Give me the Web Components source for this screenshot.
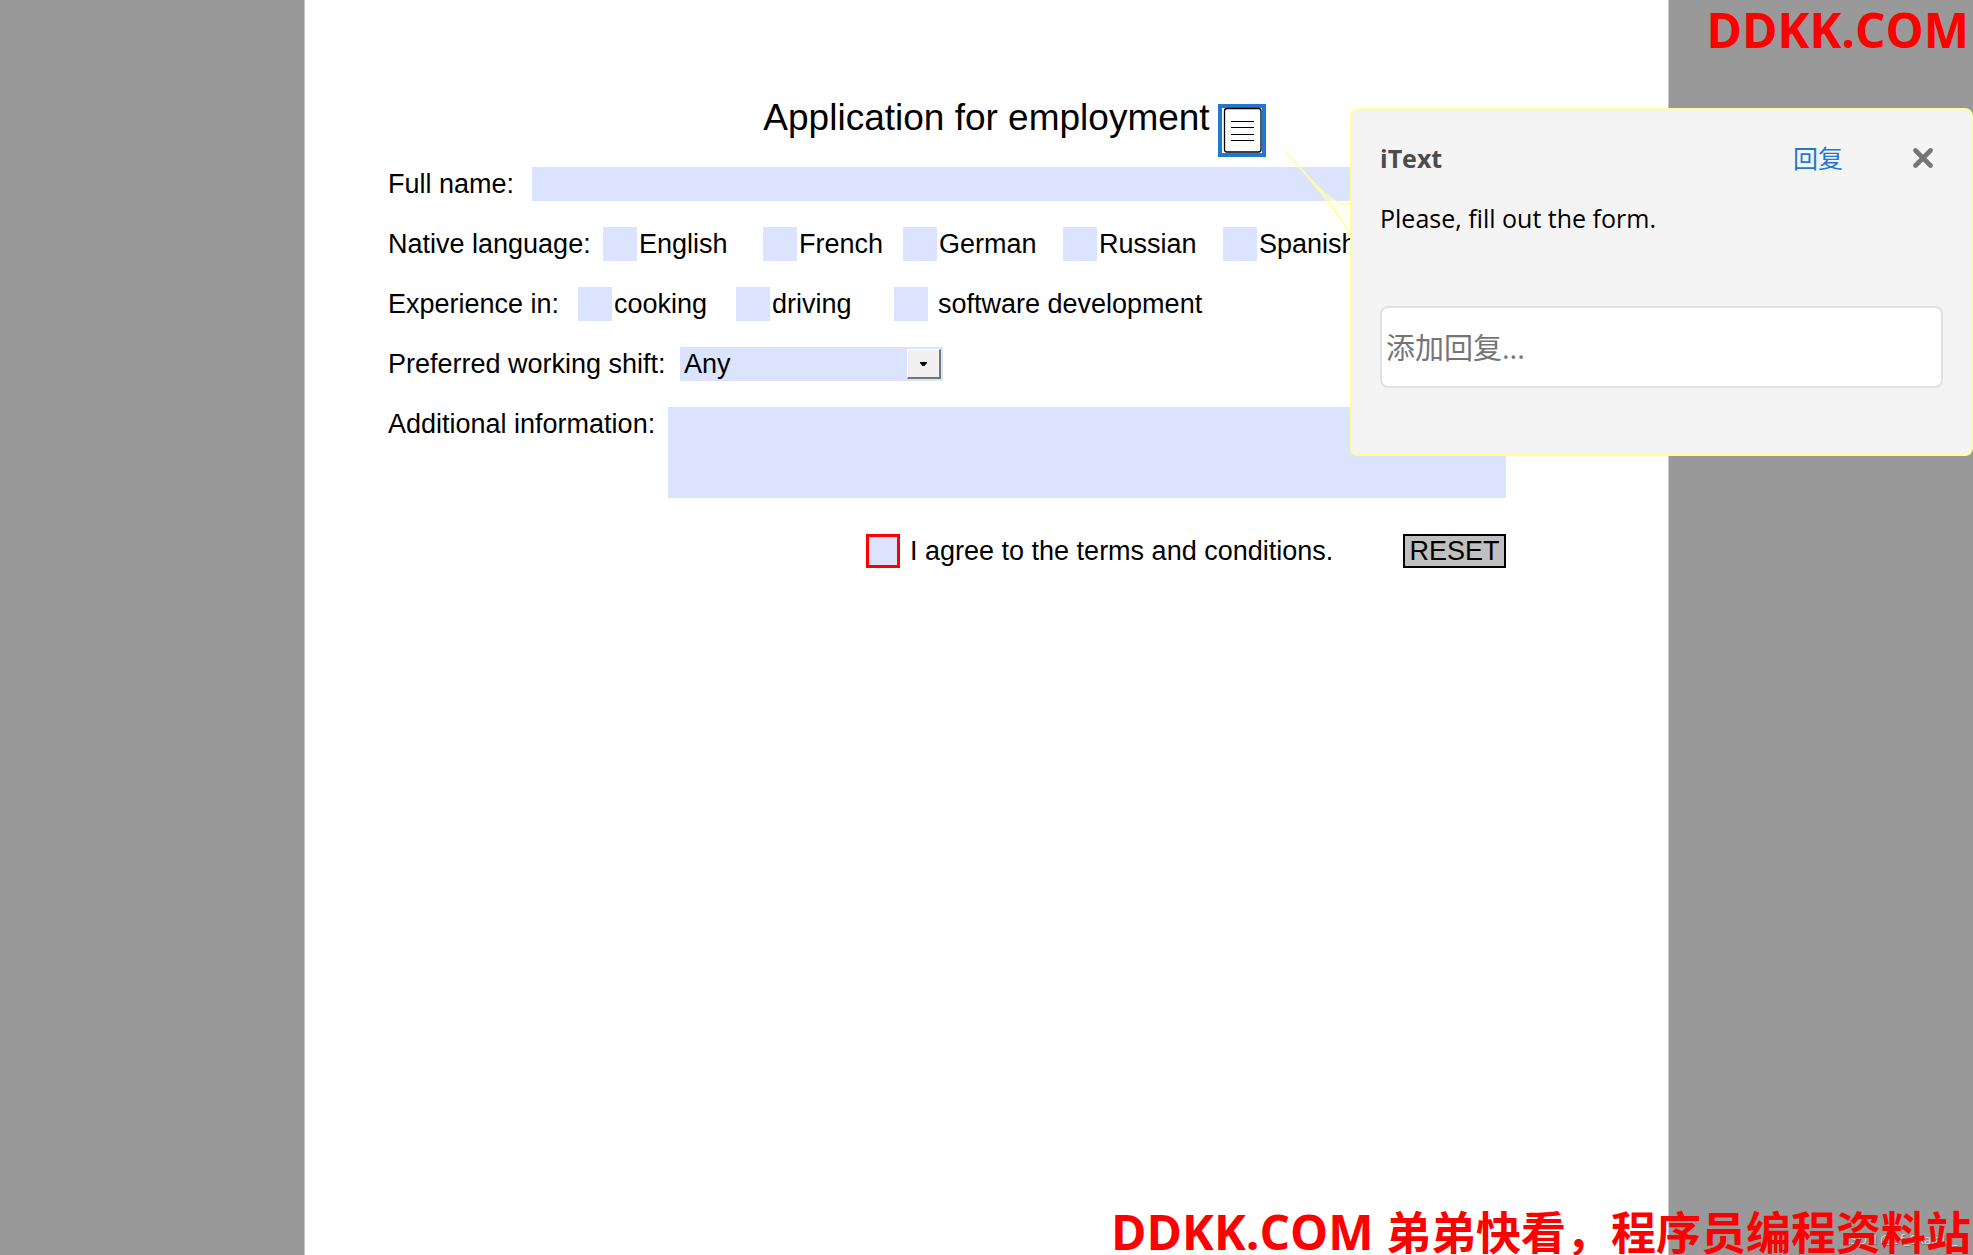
<!DOCTYPE html>
<html lang="zh">
<head>
<meta charset="utf-8">
<title>Application for employment</title>
<style>
  html, body { height: 100%; }
  body {
    margin: 0;
    overflow: hidden;
    font-family: "Liberation Sans", "Noto Sans CJK SC", sans-serif;
    font-size: 27px;
    line-height: 34px;
    color: #000;
  }
</style>
</head>
<body>
<pdf-viewer>
  <site-mark slot="mark" place="top">DDKK.COM</site-mark>
  <pdf-sheet>
    <sheet-title slot="title">Application for employment</sheet-title>
    <form-row label="Full name:" style="--label: 144px">
      <text-field label="Full name"></text-field>
    </form-row>
    <form-row label="Native language:" style="--label: 215px; --options: 160px 140px 160px 160px 160px">
      <check-field>English</check-field>
      <check-field>French</check-field>
      <check-field>German</check-field>
      <check-field>Russian</check-field>
      <check-field>Spanish</check-field>
    </form-row>
    <form-row label="Experience in:" style="--label: 190px; --options: 158px 158px 1fr">
      <check-field>cooking</check-field>
      <check-field>driving</check-field>
      <check-field class="spaced">software development</check-field>
    </form-row>
    <form-row label="Preferred working shift:" style="--label: 292px">
      <combo-field label="Preferred working shift" options="Any,Morning,Evening"></combo-field>
    </form-row>
    <form-row label="Additional information:" style="--label: 280px">
      <text-field label="Additional information" multiline></text-field>
    </form-row>
    <form-actions slot="actions">
      <check-field class="spaced required">I agree to the terms and conditions.</check-field>
    </form-actions>
  </pdf-sheet>
  <note-popup slot="popup" author="iText">Please, fill out the form.</note-popup>
  <user-mark slot="mark">CSDN @of_0kalala_</user-mark>
  <site-mark slot="mark" place="bottom">DDKK.COM <span lang="zh">弟弟快看，程序员编程资料站</span></site-mark>
</pdf-viewer>

<script>
class BaseElement extends HTMLElement {
  connectedCallback() {
    if (this.shadowRoot) return;
    this.attachShadow({ mode: "open" });
    this.shadowRoot.innerHTML = `
      <style>
        *, *::before, *::after { box-sizing: border-box; }
        input, textarea, select, button { font: inherit; color: inherit; margin: 0; }
      </style>
      ${this.render()}`;
  }
}

class PdfViewer extends BaseElement {
  render() {
    return `
      <style>
        :host {
          display: flex;
          justify-content: center;
          position: relative;
          min-height: 100%;
          overflow: hidden;
          background: #999;
        }
      </style>
      <slot></slot>
      <slot name="popup"></slot>
      <slot name="mark"></slot>`;
  }
}

class PdfSheet extends BaseElement {
  render() {
    return `
      <style>
        :host {
          display: block;
          box-sizing: border-box;
          width: 100%;
          max-width: 1365px;
          min-height: 100vh;
          background: #fff;
          border: solid #c6c6c6;
          border-width: 0 1px;
        }
        header { display: flex; justify-content: center; padding: 96px 0 27px; }
        form { padding: 0 162px 0 83px; }
        .rows { display: flex; flex-direction: column; gap: 26px; margin-bottom: 36px; }
      </style>
      <header><slot name="title"></slot></header>
      <form>
        <div class="rows"><slot></slot></div>
        <slot name="actions"></slot>
      </form>`;
  }
}

class SheetTitle extends BaseElement {
  render() {
    return `
      <style>
        :host { display: block; position: relative; }
        h1 { margin: 0; font-size: 37px; line-height: 44px; font-weight: 400; white-space: nowrap; }
        /* annotation marker, sits over the page next to the heading */
        button {
          position: absolute;
          left: calc(100% + 8px);
          top: 8px;
          width: 48px;
          height: 53px;
          padding: 0;
          border: 0;
          background: none;
        }
        svg { display: block; }
      </style>
      <h1><slot></slot></h1>
      <button type="button" aria-label="Note">
        <svg width="48" height="53" viewBox="0 0 48 53">
          <rect width="48" height="53" fill="#2277cf"/>
          <rect x="4" y="4" width="40" height="45" fill="#fff"/>
          <rect x="6.5" y="4.5" width="36.5" height="43.5" rx="2.5" fill="#fff" stroke="#000" stroke-width="1.3"/>
          <path d="M13 17.5h23M13 23.5h23M13 30.5h23M13 36.5h23" stroke="#000"/>
        </svg>
      </button>`;
  }
}

class FormRow extends BaseElement {
  render() {
    return `
      <style>
        :host { display: grid; grid-template-columns: var(--label) 1fr; }
        .label { white-space: nowrap; }
        .fields { display: grid; grid-template-columns: var(--options, 1fr); }
      </style>
      <div class="label">${this.getAttribute("label")}</div>
      <div class="fields"><slot></slot></div>`;
  }
}

class TextField extends BaseElement {
  render() {
    const label = this.getAttribute("label");
    const control = this.hasAttribute("multiline")
      ? `<textarea aria-label="${label}"></textarea>`
      : `<input type="text" aria-label="${label}">`;
    return `
      <style>
        :host { display: block; }
        input, textarea {
          display: block;
          width: 100%;
          height: 34px;
          padding: 0 4px;
          border: 0;
          border-radius: 0;
          background: #dce3ff;
          resize: none;
        }
        textarea { height: 91px; }
      </style>
      ${control}`;
  }
}

class CheckField extends BaseElement {
  render() {
    return `
      <style>
        :host { display: block; }
        label { display: flex; gap: 2px; white-space: nowrap; }
        input {
          appearance: none;
          flex: none;
          width: 34px;
          height: 34px;
          background: #dce3ff;
        }
        :host(.spaced) label { gap: 10px; }
        :host(.required) input { border: 3px solid #f00; }
      </style>
      <label><input type="checkbox"><slot></slot></label>`;
  }
}

class ComboField extends BaseElement {
  render() {
    const options = this.getAttribute("options").split(",");
    return `
      <style>
        :host { display: grid; width: 263px; background: #dce3ff; }
        select, .arrow { grid-area: 1 / 1; }
        select {
          appearance: none;
          width: 100%;
          height: 34px;
          padding: 0 40px 0 4px;
          border: 0;
          background: none;
        }
        .arrow {
          justify-self: end;
          display: grid;
          place-items: center;
          width: 34px;
          height: 30px;
          margin: 2px;
          background: #f0f0f0;
          border: solid;
          border-width: 1px 2px 2px 1px;
          border-color: #fff #777 #777 #fff;
          pointer-events: none;
        }
      </style>
      <select aria-label="${this.getAttribute("label")}">
        ${options.map((o) => `<option>${o}</option>`).join("")}
      </select>
      <span class="arrow">
        <svg width="7" height="4" viewBox="0 0 7 4"><path d="M0 0h7v1L4.5 4h-2L0 1z"/></svg>
      </span>`;
  }
}

class FormActions extends BaseElement {
  render() {
    return `
      <style>
        :host { display: flex; justify-content: flex-end; gap: 60px; }
        ::slotted(check-field) { width: 477px; }
        button {
          width: 103px;
          height: 34px;
          padding: 0;
          border: 2px solid #000;
          border-radius: 0;
          background: #c0c0c0;
          line-height: 28px;
        }
      </style>
      <slot></slot>
      <button type="reset">RESET</button>`;
  }
}

class NotePopup extends BaseElement {
  render() {
    return `
      <style>
        :host {
          position: absolute;
          top: 108px;
          right: 0;
          box-sizing: border-box;
          width: 623px;
          height: 348px;
          padding: 32px 28px;
          border: 2px solid #ff9;
          border-radius: 8px;
          background: #f4f4f4;
          font-family: "Open Sans", "Noto Sans CJK SC", sans-serif;
          font-size: 25px;
        }
        .tail { position: absolute; right: 100%; top: 40px; }
        header { display: flex; align-items: center; height: 32px; }
        h2 { flex: 1; margin: 0; font-size: 25px; font-weight: 700; color: #4b4b4b; }
        button { padding: 0; border: 0; background: none; }
        .reply { margin-right: 70px; color: #2277cf; }
        .close { margin-right: 10px; }
        svg { display: block; }
        p { margin: 27px 0 71px; }
        input {
          display: block;
          width: 100%;
          height: 82px;
          padding: 0 4px;
          border: 2px solid #e1e1e1;
          border-radius: 8px;
          background: #fff;
          font-size: 29px;
        }
        input::placeholder { color: #757575; }
      </style>
      <svg class="tail" width="68" height="86" viewBox="0 0 68 86">
        <path d="M1 1L19 21C34 38 52 57 66 54V84C54 62 36 42 19 21z" fill="#ffffe8" fill-opacity=".5"/>
        <path d="M1 1L19 21C34 38 52 57 66 54M19 21C36 42 54 62 66 84" fill="none" stroke="#ff9" stroke-width="1.4"/>
      </svg>
      <header>
        <h2>${this.getAttribute("author")}</h2>
        <button class="reply" type="button">回复</button>
        <button class="close" type="button" aria-label="Close">
          <svg width="20" height="20" viewBox="0 0 20 20">
            <path d="M2.5 2.5l15 15M17.5 2.5l-15 15" stroke="#757575" stroke-width="4.6" stroke-linecap="round"/>
          </svg>
        </button>
      </header>
      <p><slot></slot></p>
      <input type="text" placeholder="添加回复..." aria-label="添加回复">`;
  }
}

class SiteMark extends BaseElement {
  render() {
    return `
      <style>
        :host {
          position: absolute;
          right: 4px;
          font: 700 48px/60px "Open Sans", "Noto Sans CJK SC", sans-serif;
          color: #f00;
          white-space: nowrap;
        }
        :host([place="top"]) { top: 0; }
        :host([place="bottom"]) { right: 2px; bottom: -8px; }
        ::slotted(span) { font-size: 45px; }
      </style>
      <slot></slot>`;
  }
}

class UserMark extends BaseElement {
  render() {
    return `
      <style>
        :host {
          position: absolute;
          right: 15px;
          bottom: 6px;
          font: 13px/20px "Open Sans", sans-serif;
          color: #ddd;
          text-shadow: 1px 1px 1px #666;
        }
      </style>
      <slot></slot>`;
  }
}

customElements.define("pdf-viewer", PdfViewer);
customElements.define("pdf-sheet", PdfSheet);
customElements.define("sheet-title", SheetTitle);
customElements.define("form-row", FormRow);
customElements.define("text-field", TextField);
customElements.define("check-field", CheckField);
customElements.define("combo-field", ComboField);
customElements.define("form-actions", FormActions);
customElements.define("note-popup", NotePopup);
customElements.define("site-mark", SiteMark);
customElements.define("user-mark", UserMark);
</script>
</body>
</html>
